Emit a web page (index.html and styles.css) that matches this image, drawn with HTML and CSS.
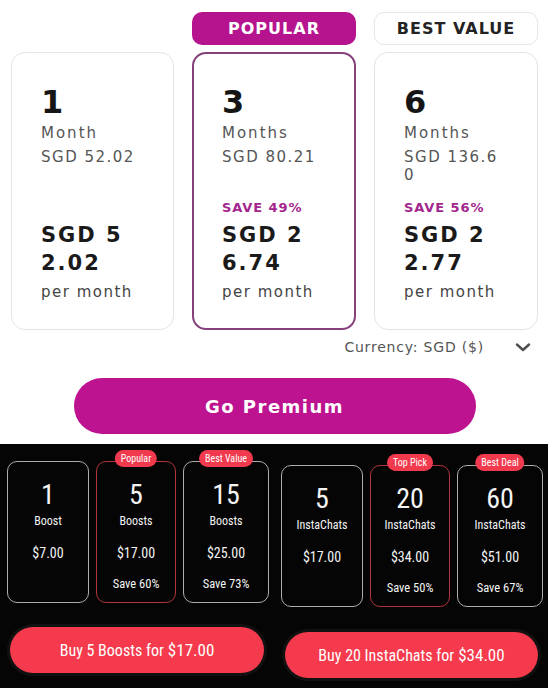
FILE: index.html
```html
<!DOCTYPE html>
<html lang="en">
<head>
<meta charset="utf-8">
<title>Premium plans</title>
<link rel="stylesheet" href="styles.css">
</head>
<body>
<section class="premium">
  <div class="badges">
    <div></div>
    <div class="badge badge-popular">POPULAR</div>
    <div class="badge badge-best">BEST VALUE</div>
  </div>
  <div class="plans">
    <div class="plan">
      <div class="plan-top">
        <div class="plan-num">1</div>
        <div class="plan-unit">Month</div>
        <div class="plan-total">SGD 52.02</div>
      </div>
      <div class="plan-save"></div>
      <div class="plan-price">SGD 52.02</div>
      <div class="plan-per">per month</div>
    </div>
    <div class="plan plan-selected">
      <div class="plan-top">
        <div class="plan-num">3</div>
        <div class="plan-unit">Months</div>
        <div class="plan-total">SGD 80.21</div>
      </div>
      <div class="plan-save">SAVE 49%</div>
      <div class="plan-price">SGD 26.74</div>
      <div class="plan-per">per month</div>
    </div>
    <div class="plan">
      <div class="plan-top">
        <div class="plan-num">6</div>
        <div class="plan-unit">Months</div>
        <div class="plan-total">SGD 136.60</div>
      </div>
      <div class="plan-save">SAVE 56%</div>
      <div class="plan-price">SGD 22.77</div>
      <div class="plan-per">per month</div>
    </div>
  </div>
  <div class="currency">
    <span class="currency-label">Currency: SGD ($)</span>
    <svg class="chevron" width="16" height="9" viewBox="0 0 16 9"><polyline points="2,1.5 8,7 14,1.5" fill="none" stroke="#505050" stroke-width="2.4" stroke-linecap="round" stroke-linejoin="round"/></svg>
  </div>
  <button class="go-premium">Go Premium</button>
</section>
<section class="extras">
  <div class="group">
    <div class="packs">
      <div class="pack">
        <div class="pack-num">1</div>
        <div class="pack-unit">Boost</div>
        <div class="pack-price">$7.00</div>
      </div>
      <div class="pack pack-hot">
        <span class="tag">Popular</span>
        <div class="pack-num">5</div>
        <div class="pack-unit">Boosts</div>
        <div class="pack-price">$17.00</div>
        <div class="pack-save">Save 60%</div>
      </div>
      <div class="pack">
        <span class="tag">Best Value</span>
        <div class="pack-num">15</div>
        <div class="pack-unit">Boosts</div>
        <div class="pack-price">$25.00</div>
        <div class="pack-save">Save 73%</div>
      </div>
    </div>
    <button class="buy">Buy 5 Boosts for <span class="buy-price">$17.00</span></button>
  </div>
  <div class="group group-right">
    <div class="packs">
      <div class="pack">
        <div class="pack-num">5</div>
        <div class="pack-unit">InstaChats</div>
        <div class="pack-price">$17.00</div>
      </div>
      <div class="pack pack-hot">
        <span class="tag">Top Pick</span>
        <div class="pack-num">20</div>
        <div class="pack-unit">InstaChats</div>
        <div class="pack-price">$34.00</div>
        <div class="pack-save">Save 50%</div>
      </div>
      <div class="pack">
        <span class="tag">Best Deal</span>
        <div class="pack-num">60</div>
        <div class="pack-unit">InstaChats</div>
        <div class="pack-price">$51.00</div>
        <div class="pack-save">Save 67%</div>
      </div>
    </div>
    <button class="buy buy-right">Buy 20 InstaChats for <span class="buy-price">$34.00</span></button>
  </div>
</section>
</body>
</html>
```
FILE: styles.css
```css
* { box-sizing: border-box; margin: 0; padding: 0; }

body {
  width: 548px;
  height: 688px;
  overflow: hidden;
  background: #ffffff;
  font-family: "DejaVu Sans", sans-serif;
}

/* ---------- Premium plans (white) ---------- */
.premium {
  height: 444px;
  padding: 12px 10px 0 11px;
  background: #ffffff;
}

.badges,
.plans {
  display: grid;
  grid-template-columns: 163px 164px 164px;
  column-gap: 18px;
}

.badge {
  height: 33px;
  border-radius: 10px;
  display: flex;
  align-items: center;
  justify-content: center;
  font-size: 16px;
  font-weight: bold;
  letter-spacing: 1px;
}

.badge-popular {
  background: #b5148e;
  color: #ffffff;
}

.badge-best {
  border: 1.5px solid #e6e6e6;
  color: #232323;
}

.plans { margin-top: 7px; }

.plan {
  height: 278px;
  border: 1px solid #e4e4e4;
  border-radius: 14px;
  padding: 31px 36px 0 29px;
}

.plan-selected {
  border: 2px solid #86407c;
  padding: 30px 35px 0 28px;
}

.plan-top { height: 116px; }

.plan-num {
  font-size: 32px;
  line-height: 36px;
  font-weight: bold;
  color: #151515;
}

.plan-unit {
  margin-top: 3px;
  font-size: 15px;
  line-height: 20px;
  letter-spacing: 2px;
  color: #555555;
}

.plan-total {
  margin-top: 5px;
  font-size: 15px;
  line-height: 18px;
  letter-spacing: 1.5px;
  color: #555555;
  word-break: break-all;
}

.plan-save {
  min-height: 16px;
  font-size: 13px;
  line-height: 16px;
  font-weight: bold;
  letter-spacing: 0.9px;
  color: #a3268e;
}

.plan-price {
  margin-top: 5px;
  font-size: 21px;
  line-height: 28px;
  font-weight: bold;
  letter-spacing: 2px;
  color: #1a1a1a;
  word-break: break-all;
}

.plan-per {
  margin-top: 5px;
  font-size: 15px;
  line-height: 20px;
  letter-spacing: 1.5px;
  color: #444444;
}

.currency {
  margin-top: 8px;
  padding-right: 7px;
  display: flex;
  justify-content: flex-end;
  align-items: center;
  gap: 31px;
}

.currency-label {
  font-size: 14px;
  line-height: 18px;
  letter-spacing: 0.8px;
  color: #555555;
}

.chevron { display: block; }

.go-premium {
  display: flex;
  align-items: center;
  justify-content: center;
  width: 402px;
  height: 56px;
  margin: 22px auto 0;
  border: none;
  border-radius: 28px;
  background: #bd1390;
  color: #ffffff;
  font-family: "DejaVu Sans", sans-serif;
  font-size: 18px;
  font-weight: bold;
  letter-spacing: 1.5px;
}

/* ---------- Boosts & InstaChats (black) ---------- */
.extras {
  height: 244px;
  background: #050505;
  display: flex;
  gap: 12px;
  padding: 17px 0 0 7px;
  font-family: "Liberation Sans Narrow", "Roboto Condensed", "DejaVu Sans Condensed", Roboto, sans-serif;
  font-stretch: condensed;
  color: #f4f4f4;
}

.group {
  width: 262px;
  display: flex;
  flex-direction: column;
}

.group-right { padding-top: 4px; }

.packs {
  display: grid;
  grid-template-columns: 82px 80px 86px;
  column-gap: 7px;
}

.pack {
  position: relative;
  height: 142px;
  border: 1px solid #adadad;
  border-radius: 10px;
  padding-top: 17px;
  text-align: center;
}

.pack-hot { border-color: #b3333d; }

.tag {
  position: absolute;
  top: -12px;
  left: 50%;
  transform: translateX(-50%);
  height: 17px;
  padding: 0 6px;
  border-radius: 9px;
  background: #f13a4e;
  color: #ffffff;
  font-size: 10px;
  line-height: 17px;
  white-space: nowrap;
}

.pack-num {
  font-size: 28px;
  line-height: 32px;
}

.pack-unit {
  margin-top: 2px;
  font-size: 12px;
  line-height: 16px;
}

.pack-price {
  margin-top: 15px;
  font-size: 14px;
  line-height: 18px;
}

.pack-save {
  margin-top: 14px;
  font-size: 12.5px;
  line-height: 16px;
}

.buy {
  display: flex;
  align-items: center;
  justify-content: center;
  gap: 4px;
  width: 254px;
  height: 46px;
  margin: 24px 0 0 3px;
  border: none;
  border-radius: 23px;
  background: #f43a4c;
  box-shadow: 0 0 0 3px #111111;
  color: #ffffff;
  font-family: inherit;
  font-stretch: condensed;
  font-size: 16px;
}

.buy-right {
  width: 253px;
  margin: 25px 0 0 4px;
}

.buy-price { font-size: 17px; }
```
